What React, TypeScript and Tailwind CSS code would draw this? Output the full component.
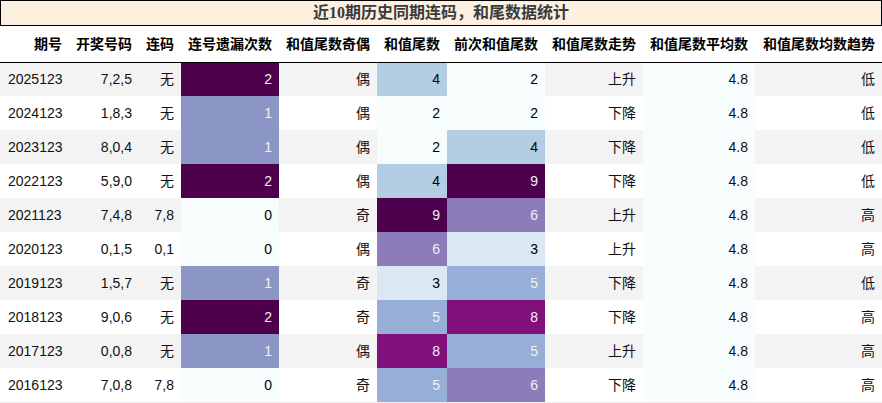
import React from "react";

const WIDTHS = [69, 70, 42, 98, 98, 70, 98, 98, 112, 127];
const HEADERS = ["期号", "开奖号码", "连码", "连号遗漏次数", "和值尾数奇偶", "和值尾数", "前次和值尾数", "和值尾数走势", "和值尾数平均数", "和值尾数均数趋势"];

type Row = [string, string, string, number, string, number, number, string, string, string];

const ROWS: Row[] = [
  ["2025123", "7,2,5", "无", 2, "偶", 4, 2, "上升", "4.8", "低"],
  ["2024123", "1,8,3", "无", 1, "偶", 2, 2, "下降", "4.8", "低"],
  ["2023123", "8,0,4", "无", 1, "偶", 2, 4, "下降", "4.8", "低"],
  ["2022123", "5,9,0", "无", 2, "偶", 4, 9, "下降", "4.8", "低"],
  ["2021123", "7,4,8", "7,8", 0, "奇", 9, 6, "上升", "4.8", "高"],
  ["2020123", "0,1,5", "0,1", 0, "偶", 6, 3, "上升", "4.8", "高"],
  ["2019123", "1,5,7", "无", 1, "奇", 3, 5, "下降", "4.8", "低"],
  ["2018123", "9,0,6", "无", 2, "奇", 5, 8, "下降", "4.8", "高"],
  ["2017123", "0,0,8", "无", 1, "偶", 8, 5, "上升", "4.8", "高"],
  ["2016123", "7,0,8", "7,8", 0, "奇", 5, 6, "下降", "4.8", "高"],
];

// BuPu gradient lookups
const missColor: Record<number, [string, string]> = {
  0: ["#f7fcfd", "#000000"],
  1: ["#8c96c6", "#f1f1f1"],
  2: ["#4d004b", "#f1f1f1"],
};
const tailColor: Record<number, [string, string]> = {
  2: ["#f7fcfd", "#000000"],
  3: ["#dbe7f2", "#000000"],
  4: ["#b3cde3", "#000000"],
  5: ["#97aed6", "#f1f1f1"],
  6: ["#8c7dba", "#f1f1f1"],
  8: ["#810f7c", "#f1f1f1"],
  9: ["#4d004b", "#f1f1f1"],
};

const FONT = { fontFamily: '"Liberation Sans", "Noto Sans CJK SC", sans-serif' };

export default function App() {
  return (
    <div className="w-[882px] bg-white text-black" style={FONT}>
      <div
        className="h-[26px] border border-black bg-[#fdf0e1] text-[#3a3a3a] text-[16px] font-bold flex items-center justify-center leading-none"
        style={{ fontFamily: '"Liberation Serif", "Noto Sans CJK SC", serif' }}
      >
        近10期历史同期连码，和尾数据统计
      </div>
      <table className="table-fixed border-collapse w-[882px] text-[14px]">
        <colgroup>
          {WIDTHS.map((w, i) => (
            <col key={i} style={{ width: w }} />
          ))}
        </colgroup>
        <thead>
          <tr className="h-[36px] border-b border-black">
            {HEADERS.map((h) => (
              <th key={h} className="text-right pr-[7px] pl-0 font-bold whitespace-nowrap pt-[1px]">
                {h}
              </th>
            ))}
          </tr>
        </thead>
        <tbody>
          {ROWS.map((r, i) => {
            const m = missColor[r[3]];
            const t = tailColor[r[5]];
            const p = tailColor[r[6]];
            return (
              <tr key={r[0]} className={`h-[34px] ${i % 2 === 0 ? "bg-[#f3f3f3]" : "bg-white"}`}>
                <td className="text-left pl-[8px] text-[#111]">{r[0]}</td>
                <td className="text-right pr-[7px] text-[#111]">{r[1]}</td>
                <td className="text-right pr-[7px] text-[#111]">{r[2]}</td>
                <td className="text-right pr-[7px]" style={{ backgroundColor: m[0], color: m[1] }}>{r[3]}</td>
                <td className="text-right pr-[7px] text-[#111]">{r[4]}</td>
                <td className="text-right pr-[7px]" style={{ backgroundColor: t[0], color: t[1] }}>{r[5]}</td>
                <td className="text-right pr-[7px]" style={{ backgroundColor: p[0], color: p[1] }}>{r[6]}</td>
                <td className="text-right pr-[7px] text-[#111]">{r[7]}</td>
                <td className="text-right pr-[7px] bg-[#f7fcfd] text-[#111]">{r[8]}</td>
                <td className="text-right pr-[7px] text-[#111]">{r[9]}</td>
              </tr>
            );
          })}
        </tbody>
      </table>
      <div className="h-px bg-[#eeeeee]" />
    </div>
  );
}
